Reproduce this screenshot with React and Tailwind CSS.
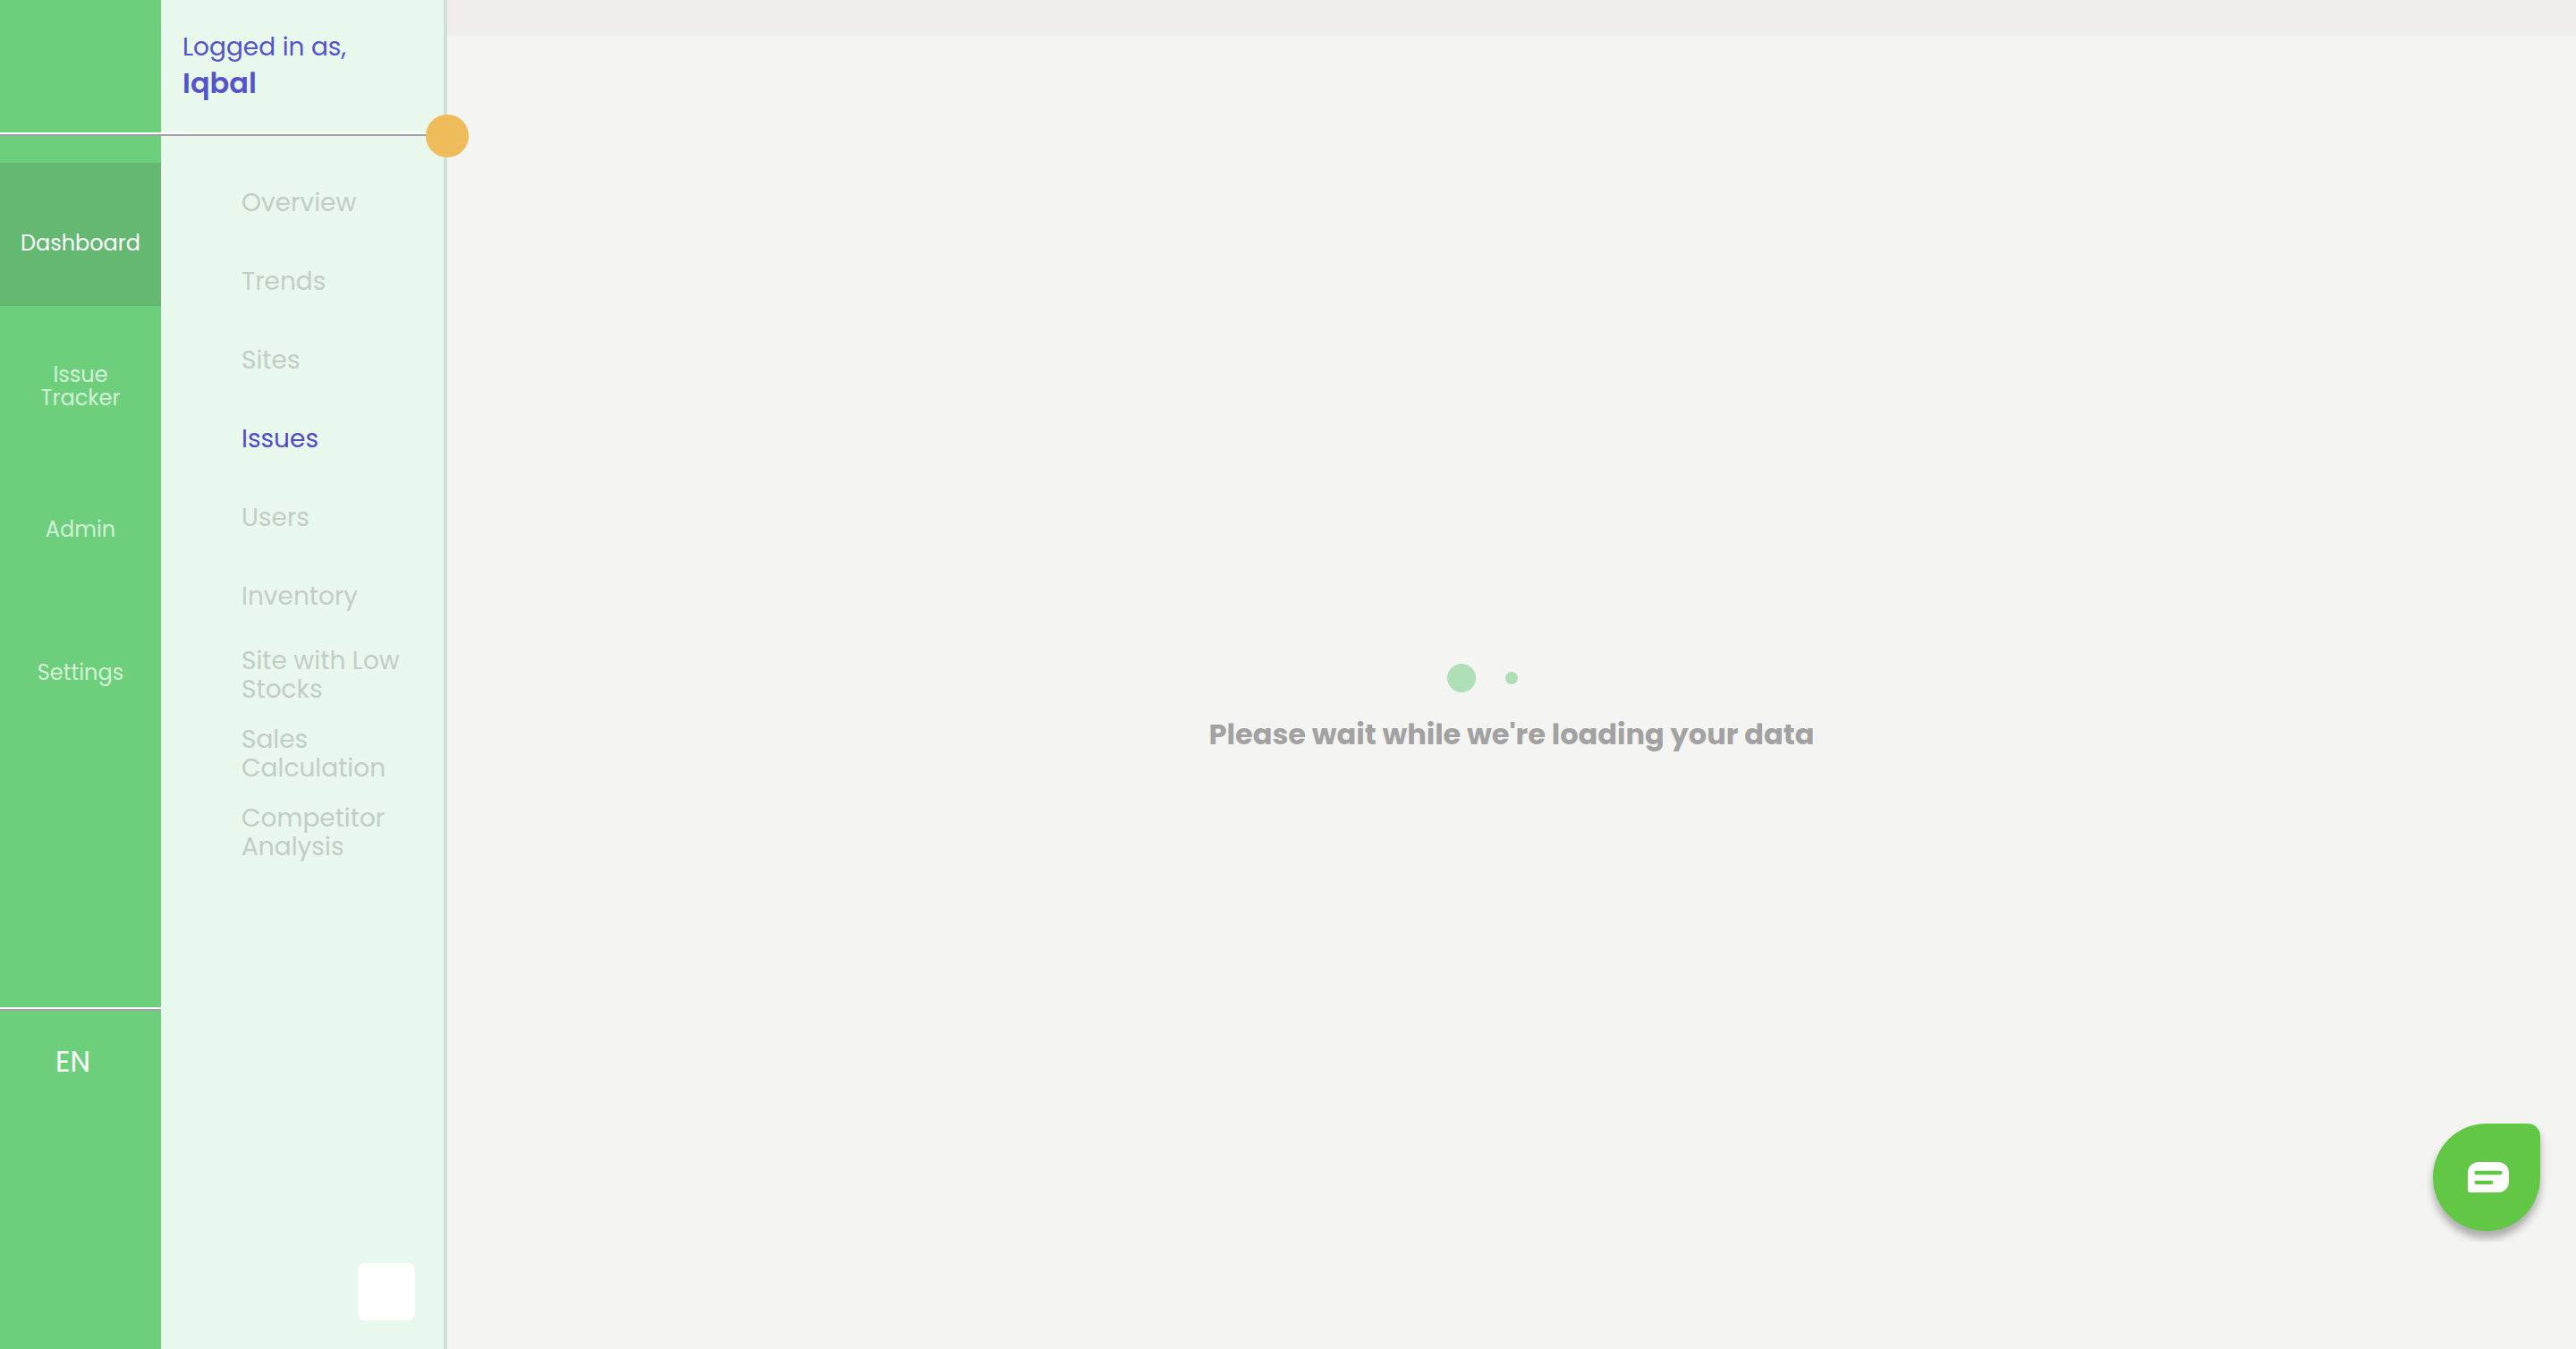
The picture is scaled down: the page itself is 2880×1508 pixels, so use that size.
const sections = [
  { label: 'Dashboard', active: true },
  { label: 'Issue Tracker' },
  { label: 'Admin' },
  { label: 'Settings' },
];

const pages = [
  { label: 'Overview' },
  { label: 'Trends' },
  { label: 'Sites' },
  { label: 'Issues', active: true },
  { label: 'Users' },
  { label: 'Inventory' },
  { label: 'Site with Low Stocks' },
  { label: 'Sales Calculation' },
  { label: 'Competitor Analysis' },
];

function Rail() {
  return (
    <aside className="flex w-[180px] shrink-0 flex-col bg-[#6dcf7c]">
      <div className="h-[148px]" />
      <div className="h-1 border-t-2 border-white bg-[#a0a0a6]" />
      <nav className="mt-[30px] flex flex-col" aria-label="Sections">
        {sections.map((s) => (
          <a
            key={s.label}
            href="#"
            aria-current={s.active ? 'page' : undefined}
            className={
              'flex h-40 items-center justify-center px-5 pt-5 text-center text-2xl leading-[26px] ' +
              (s.active ? 'bg-[#64b871] text-white' : 'text-[#d3f1d7]')
            }
          >
            {s.label}
          </a>
        ))}
      </nav>
      <div className="mt-auto h-[382px]">
        <div className="h-1 border-t-2 border-white bg-[#a0a0a6]" />
        <button type="button" className="mt-9 ml-[62px] block text-[32px] leading-[42px] text-white">
          EN
        </button>
      </div>
    </aside>
  );
}

function Submenu() {
  return (
    <aside className="relative flex w-80 shrink-0 flex-col border-r-4 border-[#d2e1d6] bg-[#e8f8ed]">
      <header className="flex h-[148px] flex-col justify-center pb-1 pl-6 text-[#5553c9]">
        <p className="text-[28px] leading-[42px]">Logged in as,</p>
        <p className="text-[32px] leading-[38px] font-semibold">Iqbal</p>
      </header>
      <div className="h-1 border-t-2 border-white bg-[#9fa3a8]" />
      <button
        type="button"
        aria-label="Collapse menu"
        className="absolute top-32 -right-7 size-12 rounded-full bg-[#eebc5a]"
      />
      <nav className="mt-[31px] flex flex-col" aria-label="Pages">
        {pages.map((p) => (
          <a
            key={p.label}
            href="#"
            aria-current={p.active ? 'page' : undefined}
            className={
              'flex h-[88px] items-center pr-10 pl-[90px] text-[28px] leading-8 ' +
              (p.active ? 'text-[#4f4bc8]' : 'text-[#c3cdc5]')
            }
          >
            {p.label}
          </a>
        ))}
      </nav>
      <button
        type="button"
        aria-label="Help"
        className="mt-auto mr-8 mb-8 size-16 self-end rounded-lg bg-white"
      />
    </aside>
  );
}

function ChatButton() {
  return (
    <div className="fixed right-6 bottom-[120px] overflow-hidden pt-3 pr-4 pb-3 pl-4">
      <button
        type="button"
        aria-label="Open chat"
        className="flex size-[120px] items-center justify-center rounded-[60px] rounded-tr-[14px] bg-[#62c744] pl-1 shadow-[0_8px_10px_rgba(0,0,0,0.3)]"
      >
        <svg width="46" height="34" viewBox="0 0 46 34" fill="none" aria-hidden="true">
          <path
            d="M12 0H34A12 12 0 0 1 46 12V22A12 12 0 0 1 34 34H2.500A2.500 2.500 0 0 1 0 31.500V12A12 12 0 0 1 12 0Z"
            fill="#fff"
          />
          <path d="M9.500 12H36.500M9.500 22.800H26.300" stroke="#62c744" strokeWidth="4.300" strokeLinecap="round" />
        </svg>
      </button>
    </div>
  );
}

export default function App() {
  return (
    <div className="flex min-h-screen bg-[#f4f4f2] font-['Poppins','Inter',sans-serif]">
      <Rail />
      <Submenu />
      <main className="flex min-w-0 flex-1 flex-col">
        <div className="h-10 bg-[#efeeec]" />
        <div className="flex flex-1 flex-col items-center justify-center pt-[38px]" role="status">
          <div className="flex w-36 items-center justify-between">
            <span className="size-8 rounded-full bg-[#afdfb6]" />
            <span className="mr-[65px] size-3.5 rounded-full bg-[#afdfb6]" />
          </div>
          <p className="mt-[23px] text-[32px] leading-12 font-bold text-[#a2a2a2]">
            Please wait while we're loading your data
          </p>
        </div>
      </main>
      <ChatButton />
    </div>
  );
}
